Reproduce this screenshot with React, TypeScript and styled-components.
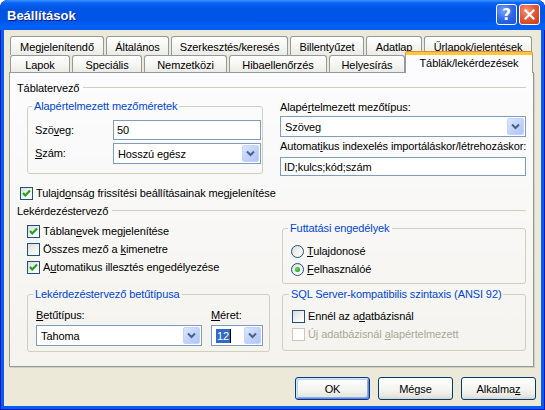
import React from 'react';
import styled, { createGlobalStyle } from 'styled-components';

// ----- global -----
const GlobalStyle = createGlobalStyle`
  html, body {
    margin: 0;
    padding: 0;
    background: #ffffff;
  }
  body {
    font-family: "Liberation Sans", Arial, sans-serif;
    font-size: 11px;
    letter-spacing: -0.1px;
    color: #000;
  }
  * {
    box-sizing: border-box;
  }
`;

// ----- window frame -----
const Window = styled.div`
  width: 545px;
  height: 410px;
  display: flex;
  flex-direction: column;
  background: #0a5cf0;
  border-radius: 8px 8px 0 0;
  overflow: hidden;
  box-shadow: inset 1px 0 #0019b8, inset -1px 0 #0019b8, inset 0 -1px #0019b8;
`;

const TitleBar = styled.div`
  height: 30px;
  flex-shrink: 0;
  display: flex;
  align-items: center;
  padding: 0 5px 1px 7px;
  border-radius: 8px 8px 0 0;
  background: linear-gradient(
    to bottom,
    #3d95ff 0%,
    #0a63f5 10%,
    #0054e3 30%,
    #0055e8 70%,
    #0062f8 88%,
    #0a5cf0 100%
  );
`;

const TitleText = styled.span`
  flex: 1;
  color: #fff;
  font-family: "Liberation Sans", Arial, sans-serif;
  font-weight: bold;
  font-size: 13px;
  letter-spacing: 0;
  text-shadow: 1px 1px #0a1e8a;
  padding-top: 1px;
`;

const TitleButton = styled.div<{ $kind: 'help' | 'close' }>`
  width: 21px;
  height: 21px;
  margin-left: 2px;
  border: 1px solid #fff;
  border-radius: 3px;
  display: flex;
  align-items: center;
  justify-content: center;
  color: #fff;
  font-family: "DejaVu Sans", sans-serif;
  font-weight: bold;
  font-size: 15px;
  background: ${({ $kind }) =>
    $kind === 'close'
      ? 'radial-gradient(circle at 35% 30%, #f3967a 0%, #e35a37 45%, #c63c1c 100%)'
      : 'radial-gradient(circle at 35% 30%, #7aa4ff 0%, #2d67ea 50%, #1c4fd4 100%)'};
`;

const Client = styled.div`
  flex: 1;
  margin: 0 4px 4px;
  background: #ece9d8;
  display: flex;
  flex-direction: column;
  padding-top: 6px;
`;

// ----- tabs -----
const TabRow = styled.div`
  display: flex;
  align-items: flex-start;
  gap: 2px;
  padding-left: 6px;
`;

const Tab = styled.div<{ $w: number; $h: number }>`
  width: ${({ $w }) => $w}px;
  height: ${({ $h }) => $h}px;
  border: 1px solid #919b9c;
  border-bottom: none;
  border-radius: 3px 3px 0 0;
  background: linear-gradient(to bottom, #ffffff 0%, #f6f6f3 50%, #ecebe6 100%);
  display: flex;
  align-items: center;
  justify-content: center;
  padding-top: 2px;
  white-space: nowrap;
`;

const ActiveTab = styled.div<{ $w: number }>`
  position: relative;
  z-index: 1;
  width: ${({ $w }) => $w}px;
  height: 21px;
  margin-top: -3px;
  margin-bottom: -1px;
  margin-left: -2px;
  border: 1px solid #919b9c;
  border-top: 3px solid #ffc83c;
  border-bottom: none;
  border-radius: 3px 3px 0 0;
  background: #fcfcfe;
  box-shadow: 0 -1px 0 #e68b2c;
  display: flex;
  align-items: flex-start;
  justify-content: center;
  padding-top: 2px;
  white-space: nowrap;
`;

const Panel = styled.div`
  margin-left: 5px;
  width: 525px;
  height: 295px;
  border: 1px solid #919b9c;
  background: linear-gradient(to bottom, #fcfcfe 0%, #f4f3ee 100%);
  box-shadow: 1px 1px 0 #d0cebf;
  padding: 8px 7px 0 7px;
  display: flex;
  flex-direction: column;
`;

// ----- panel content -----
const SectionHeader = styled.div`
  display: flex;
  align-items: center;
  gap: 4px;
  height: 13px;
  white-space: nowrap;

  &::after {
    content: '';
    flex: 1;
    border-top: 1px solid #d0d0bf;
  }
`;

const TopGrid = styled.div`
  display: grid;
  grid-template-columns: 246px 246px;
  column-gap: 17px;
  margin-top: 6px;
  align-items: start;
`;

const BottomGrid = styled.div`
  display: grid;
  grid-template-columns: 253px 244px;
  column-gap: 12px;
  align-items: start;
`;

const Column = styled.div<{ $indent?: number; $pt?: number }>`
  display: flex;
  flex-direction: column;
  padding-left: ${({ $indent }) => $indent ?? 0}px;
  padding-top: ${({ $pt }) => $pt ?? 0}px;
`;

const Group = styled.fieldset<{ $pad: string; $mt?: number; $ml?: number }>`
  margin: ${({ $mt }) => $mt ?? 0}px 0 0 ${({ $ml }) => $ml ?? 0}px;
  padding: ${({ $pad }) => $pad};
  border: 1px solid #d0d0bf;
  border-radius: 3px;
  min-width: 0;
`;

const Legend = styled.legend`
  color: #0046d5;
  padding: 0 2px;
  margin-left: -3px;
  line-height: 13px;
  white-space: nowrap;
`;

const FormGrid = styled.div<{ $cols: string }>`
  display: grid;
  grid-template-columns: ${({ $cols }) => $cols};
  align-items: center;
  row-gap: 3px;
  column-gap: 9px;
`;

const FieldLabel = styled.div<{ $mt?: number }>`
  line-height: 13px;
  margin-top: ${({ $mt }) => $mt ?? 0}px;
  white-space: nowrap;
`;

const TextBox = styled.div<{ $h?: number; $mt?: number }>`
  height: ${({ $h }) => $h ?? 20}px;
  margin-top: ${({ $mt }) => $mt ?? 0}px;
  border: 1px solid #7f9db9;
  background: #fff;
  display: flex;
  align-items: center;
  padding-left: 3px;
  white-space: nowrap;
`;

const Combo = styled.div<{ $mt?: number }>`
  height: 21px;
  margin-top: ${({ $mt }) => $mt ?? 0}px;
  border: 1px solid #7f9db9;
  background: #fff;
  display: flex;
  align-items: center;
  padding: 1px;
`;

const ComboText = styled.span`
  flex: 1;
  padding-left: 3px;
  display: flex;
  align-items: center;
  white-space: nowrap;
`;

const ComboButton = styled.span`
  width: 17px;
  height: 17px;
  border: 1px solid #c3d3fd;
  border-radius: 2px;
  background: linear-gradient(135deg, #dce7fe 0%, #c2d4fb 50%, #b1c5f3 100%);
  display: flex;
  align-items: center;
  justify-content: center;
`;

const Selected = styled.span`
  background: #316ac5;
  color: #fff;
  padding: 0 1px;
  line-height: 14px;
`;

const Caret = styled.span`
  width: 1px;
  height: 14px;
  background: #000;
`;

const OptionRow = styled.div<{ $disabled?: boolean; $ml?: number }>`
  display: flex;
  align-items: center;
  gap: 3px;
  height: 18px;
  margin-left: ${({ $ml }) => $ml ?? 0}px;
  color: ${({ $disabled }) => ($disabled ? '#aca899' : '#000')};
  white-space: nowrap;
`;

const Box = styled.span<{ $disabled?: boolean }>`
  width: 13px;
  height: 13px;
  flex-shrink: 0;
  border: 1px solid ${({ $disabled }) => ($disabled ? '#cac8bb' : '#1c5180')};
  background: ${({ $disabled }) =>
    $disabled ? '#ffffff' : 'linear-gradient(135deg, #dcdcd7 0%, #f4f4f1 60%, #ffffff 100%)'};
  display: flex;
  align-items: center;
  justify-content: center;
`;

const RadioCircle = styled.span`
  width: 13px;
  height: 13px;
  flex-shrink: 0;
  border-radius: 50%;
  border: 1px solid #1c5180;
  background: linear-gradient(135deg, #dcdcd7 0%, #f4f4f1 60%, #ffffff 100%);
  display: flex;
  align-items: center;
  justify-content: center;
`;

const RadioDot = styled.span`
  width: 5px;
  height: 5px;
  border-radius: 50%;
  background: radial-gradient(circle at 40% 40%, #6fe06b 0%, #21a121 70%);
`;

// ----- dialog buttons -----
const ButtonRow = styled.div`
  display: flex;
  justify-content: flex-end;
  gap: 8px;
  margin-top: 10px;
  padding-right: 5px;
`;

const Button = styled.div<{ $default?: boolean }>`
  width: 75px;
  height: 23px;
  border: 1px solid #003c74;
  border-radius: 3px;
  background: linear-gradient(to bottom, #ffffff 0%, #f3f3ef 60%, #e6e4dc 90%, #d6d0c5 100%);
  display: flex;
  align-items: center;
  justify-content: center;
  box-shadow: ${({ $default }) =>
    $default ? 'inset 1px 1px #cee7ff, inset -1px -1px #6982ee, inset 2px 2px #bcd4f6, inset -2px -2px #89adf0' : 'none'};
`;

// ----- small drawings -----
const Chevron = () => (
  <svg width="9" height="7" viewBox="0 0 9 7">
    <path d="M1 1.5 L4.5 5 L8 1.5" fill="none" stroke="#4d6185" strokeWidth="2" />
  </svg>
);

const Check = () => (
  <svg width="9" height="9" viewBox="0 0 9 9">
    <path d="M1 4 L3.3 6.5 L8 1.5" fill="none" stroke="#21a121" strokeWidth="2.2" />
  </svg>
);

const CloseIcon = () => (
  <svg width="11" height="11" viewBox="0 0 11 11">
    <path d="M1.5 1.5 L9.5 9.5 M9.5 1.5 L1.5 9.5" stroke="#fff" strokeWidth="2.2" strokeLinecap="square" />
  </svg>
);

interface OptionProps {
  checked?: boolean;
  disabled?: boolean;
  ml?: number;
  children: React.ReactNode;
}
const CheckOption: React.FC<OptionProps> = ({ checked, disabled, ml, children }) => (
  <OptionRow $disabled={disabled} $ml={ml}>
    <Box $disabled={disabled}>{checked && <Check />}</Box>
    <span>{children}</span>
  </OptionRow>
);

const RadioOption: React.FC<OptionProps> = ({ checked, children }) => (
  <OptionRow>
    <RadioCircle>{checked && <RadioDot />}</RadioCircle>
    <span>{children}</span>
  </OptionRow>
);

const ComboBox: React.FC<{ mt?: number; children: React.ReactNode }> = ({ mt, children }) => (
  <Combo $mt={mt}>
    <ComboText>{children}</ComboText>
    <ComboButton>
      <Chevron />
    </ComboButton>
  </Combo>
);

const topTabs: [string, number][] = [
  ['Megjelenítendő', 94],
  ['Általános', 63],
  ['Szerkesztés/keresés', 117],
  ['Billentyűzet', 74],
  ['Adatlap', 56],
  ['Űrlapok/jelentések', 108],
];

const bottomTabs: [string, number][] = [
  ['Lapok', 60],
  ['Speciális', 70],
  ['Nemzetközi', 83],
  ['Hibaellenőrzés', 98],
  ['Helyesírás', 76],
];

const App: React.FC = () => {
  return (
    <>
      <GlobalStyle />
      <Window>
        <TitleBar>
          <TitleText>Beállítások</TitleText>
          <TitleButton $kind="help">?</TitleButton>
          <TitleButton $kind="close">
            <CloseIcon />
          </TitleButton>
        </TitleBar>

        <Client>
          <TabRow>
            {topTabs.map(([label, w]) => (
              <Tab key={label} $w={w} $h={19}>
                {label}
              </Tab>
            ))}
          </TabRow>
          <TabRow>
            {bottomTabs.map(([label, w]) => (
              <Tab key={label} $w={w} $h={17}>
                {label}
              </Tab>
            ))}
            <ActiveTab $w={128}>Táblák/lekérdezések</ActiveTab>
          </TabRow>

          <Panel>
            <SectionHeader>Táblatervező</SectionHeader>
            <TopGrid>
              <Group $pad="7px 1px 9px 7px" $ml={10}>
                <Legend>Alapértelmezett mezőméretek</Legend>
                <FormGrid $cols="69px 1fr">
                  <FieldLabel>
                    Szö<u>v</u>eg:
                  </FieldLabel>
                  <TextBox>50</TextBox>
                  <FieldLabel>
                    <u>S</u>zám:
                  </FieldLabel>
                  <ComboBox>Hosszú egész</ComboBox>
                </FormGrid>
              </Group>

              <Column $pt={1}>
                <FieldLabel>
                  Alapé<u>r</u>telmezett mezőtípus:
                </FieldLabel>
                <ComboBox mt={2}>Szöveg</ComboBox>
                <FieldLabel $mt={3}>
                  Automat<u>i</u>kus indexelés importáláskor/létrehozáskor:
                </FieldLabel>
                <TextBox $h={19} $mt={4}>
                  ID;kulcs;kód;szám
                </TextBox>
              </Column>
            </TopGrid>

            <Column $pt={8} $indent={3}>
              <CheckOption checked>
                Tulajd<u>o</u>nság frissítési beállításainak megjelenítése
              </CheckOption>
            </Column>

            <Column $pt={2}>
              <SectionHeader>Lekérdezéstervező</SectionHeader>
            </Column>

            <BottomGrid>
              <Column $pt={5}>
                <CheckOption checked ml={10}>
                  Táblan<u>e</u>vek megjelenítése
                </CheckOption>
                <CheckOption ml={10}>
                  Összes mező a <u>k</u>imenetre
                </CheckOption>
                <CheckOption checked ml={10}>
                  A<u>u</u>tomatikus illesztés engedélyezése
                </CheckOption>

                <Group $pad="8px 7px 5px 8px" $mt={12} $ml={10}>
                  <Legend>Lekérdezéstervező betűtípusa</Legend>
                  <FormGrid $cols="166px 52px">
                    <FieldLabel>
                      <u>B</u>etűtípus:
                    </FieldLabel>
                    <FieldLabel>
                      <u>M</u>éret:
                    </FieldLabel>
                    <ComboBox>Tahoma</ComboBox>
                    <ComboBox>
                      <Selected>12</Selected>
                      <Caret />
                    </ComboBox>
                  </FormGrid>
                </Group>
              </Column>

              <Column>
                <Group $pad="7px 8px 5px 8px" $mt={5}>
                  <Legend>Futtatási engedélyek</Legend>
                  <RadioOption>
                    <u>T</u>ulajdonosé
                  </RadioOption>
                  <RadioOption checked>
                    <u>F</u>elhasználóé
                  </RadioOption>
                </Group>
                <Group $pad="6px 8px 7px 9px" $mt={4}>
                  <Legend>SQL Server-kompatibilis szintaxis (ANSI 92)</Legend>
                  <CheckOption>
                    Ennél az a<u>d</u>atbázisnál
                  </CheckOption>
                  <CheckOption disabled>
                    Új adatbázisnál <u>a</u>lapértelmezett
                  </CheckOption>
                </Group>
              </Column>
            </BottomGrid>
          </Panel>

          <ButtonRow>
            <Button $default>OK</Button>
            <Button>Mégse</Button>
            <Button>
              Alkalma<u>z</u>
            </Button>
          </ButtonRow>
        </Client>
      </Window>
    </>
  );
};

export default App;
